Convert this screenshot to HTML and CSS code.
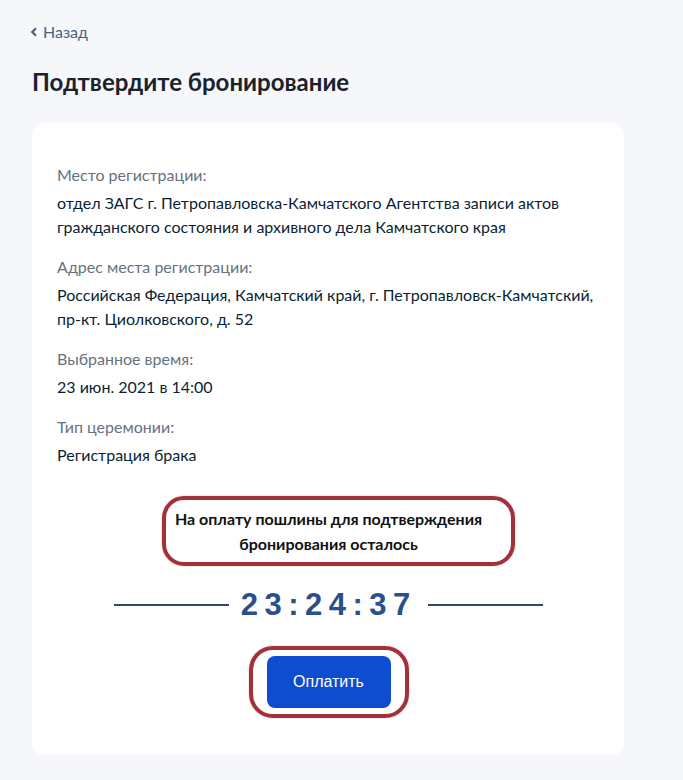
FILE: index.html
```html
<!DOCTYPE html>
<html lang="ru">
<head>
<meta charset="utf-8">
<link rel="stylesheet" href="styles.css">
</head>
<body>
<div class="page">
  <a class="back" href="#">
    <svg class="chev" width="8" height="10" viewBox="0 0 8 10"><path d="M6 1.2 2.2 5 6 8.8" fill="none" stroke="currentColor" stroke-width="2.2"/></svg>
    <span>Назад</span>
  </a>
  <h1 class="title">Подтвердите бронирование</h1>
  <div class="card">
    <div class="field">
      <div class="label">Место регистрации:</div>
      <div class="value">отдел ЗАГС г. Петропавловска-Камчатского Агентства записи актов гражданского состояния и архивного дела Камчатского края</div>
    </div>
    <div class="field">
      <div class="label">Адрес места регистрации:</div>
      <div class="value">Российская Федерация, Камчатский край, г. Петропавловск-Камчатский, <span class="nowrap">пр-кт.</span> Циолковского, д. 52</div>
    </div>
    <div class="field">
      <div class="label">Выбранное время:</div>
      <div class="value">23 июн. 2021 в 14:00</div>
    </div>
    <div class="field">
      <div class="label">Тип церемонии:</div>
      <div class="value">Регистрация брака</div>
    </div>
    <div class="notice-row">
      <div class="notice">На оплату пошлины для подтверждения<br>бронирования осталось</div>
    </div>
    <div class="timer-row">
      <span class="line"></span>
      <span class="timer">23:24:37</span>
      <span class="line"></span>
    </div>
    <div class="btn-row">
      <div class="btn-ring"><button class="pay">Оплатить</button></div>
    </div>
  </div>
</div>
</body>
</html>
```

FILE: styles.css
```css
html, body {
  margin: 0;
  padding: 0;
  background: #f5f7fa;
}
body {
  font-family: Lato, "Noto Sans", sans-serif;
  color: #0b1f33;
}
.page {
  padding: 22px 0 0 32px;
  width: 592px;
}
.back {
  display: flex;
  align-items: center;
  gap: 5px;
  color: #4a6282;
  text-decoration: none;
  font-size: 16px;
  line-height: 20px;
  margin-left: -2px;
}
.chev { display: block; }
.title {
  margin: 25px 0 0 0;
  font-size: 24px;
  line-height: 30px;
  font-weight: 700;
  color: #1a222c;
}
.card {
  margin-top: 26px;
  background: #fff;
  border-radius: 12px;
  padding: 40px 20px 37px 25px;
}
.field { margin-bottom: 16px; }
.label {
  font-size: 16px;
  line-height: 24px;
  color: #66727f;
  margin-bottom: 4px;
}
.value {
  font-size: 16px;
  line-height: 24px;
  color: #0b1f33;
}
.nowrap { white-space: nowrap; }
.notice-row {
  display: flex;
  justify-content: center;
  margin-top: 29px;
  padding-left: 16px;
}
.notice {
  border: 4px solid #a3313b;
  border-radius: 22px;
  padding: 6px 29px 6px 9px;
  text-align: center;
  white-space: nowrap;
  font-weight: 700;
  font-size: 16px;
  line-height: 25px;
  color: #111;
  box-shadow: 0 0 2px rgba(163,49,59,0.4);
}
.timer-row {
  display: flex;
  align-items: center;
  justify-content: center;
  gap: 12px;
  margin-top: 21px;
  padding-right: 4px;
}
.line {
  width: 115px;
  height: 2px;
  background: #2c4a6e;
}
.timer {
  font-family: "Liberation Sans", Arial, sans-serif;
  font-weight: 700;
  font-size: 31px;
  line-height: 36px;
  letter-spacing: 6.5px;
  margin-right: -0.5px;
  color: #2a4f8c;
}
.btn-row {
  display: flex;
  justify-content: center;
  margin-top: 23px;
  padding-right: 4px;
}
.btn-ring {
  border: 4px solid #a3313b;
  border-radius: 24px;
  padding: 6px 14px;
  box-shadow: 0 0 2px rgba(163,49,59,0.4);
}
.pay {
  display: block;
  width: 124px;
  height: 52px;
  border: none;
  border-radius: 8px;
  background: #0e4dd0;
  color: #fff;
  font-family: "Liberation Sans", Arial, sans-serif;
  font-size: 16px;
}
```
